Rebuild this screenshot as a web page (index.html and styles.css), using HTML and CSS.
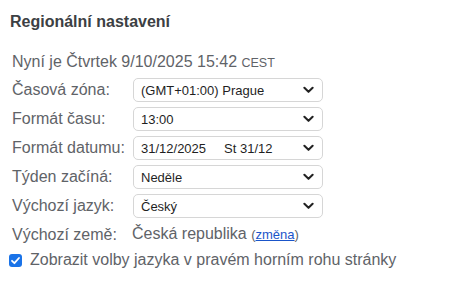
FILE: index.html
```html
<!DOCTYPE html>
<html lang="cs">
<head>
<meta charset="utf-8">
<link rel="stylesheet" href="styles.css">
</head>
<body>
<div class="panel">
  <h2 class="title">Regionální nastavení</h2>
  <div class="now">Nyní je Čtvrtek 9/10/2025 15:42 <span class="tz">CEST</span></div>
  <div class="form">
    <label class="lbl">Časová zóna:</label>
    <div class="sel"><span>(GMT+01:00) Prague</span><svg class="chev" viewBox="0 0 12 8"><path d="M1.5 1.5 L6 6 L10.5 1.5" /></svg></div>
    <label class="lbl">Formát času:</label>
    <div class="sel"><span>13:00</span><svg class="chev" viewBox="0 0 12 8"><path d="M1.5 1.5 L6 6 L10.5 1.5" /></svg></div>
    <label class="lbl">Formát datumu:</label>
    <div class="sel"><span>31/12/2025&nbsp;&nbsp;&nbsp;&nbsp; St 31/12</span><svg class="chev" viewBox="0 0 12 8"><path d="M1.5 1.5 L6 6 L10.5 1.5" /></svg></div>
    <label class="lbl">Týden začíná:</label>
    <div class="sel"><span>Neděle</span><svg class="chev" viewBox="0 0 12 8"><path d="M1.5 1.5 L6 6 L10.5 1.5" /></svg></div>
    <label class="lbl">Výchozí jazyk:</label>
    <div class="sel"><span>Český</span><svg class="chev" viewBox="0 0 12 8"><path d="M1.5 1.5 L6 6 L10.5 1.5" /></svg></div>
    <span class="lbl row">Výchozí země:</span>
    <span class="val row">Česká republika <span class="small">(<a href="#">změna</a>)</span></span>
  </div>
  <label class="check"><span class="box"><svg viewBox="0 0 13 13"><path d="M3 6.8 L5.4 9.2 L10 4" /></svg></span>Zobrazit volby jazyka v pravém horním rohu stránky</label>
</div>
</body>
</html>
```

FILE: styles.css
```css
html, body {
  margin: 0;
  padding: 0;
  background: #ffffff;
}
body {
  font-family: "Liberation Sans", Arial, Helvetica, sans-serif;
  color: #5f6368;
}
.panel {
  padding: 12px 0 0 10px;
}
.title {
  margin: 0;
  font-size: 16px;
  font-weight: bold;
  color: #3c4043;
  line-height: 20px;
}
.now {
  margin: 20px 0 0 2px;
  font-size: 16px;
  line-height: 20px;
}
.tz {
  font-size: 12.5px;
}
.form {
  display: grid;
  grid-template-columns: 121px 190px;
  row-gap: 5px;
  margin: 5px 0 0 2px;
  align-items: center;
}
.lbl {
  font-size: 16px;
  line-height: 20px;
  color: #5f6368;
}
.row {
  line-height: 22px;
}
.sel {
  height: 24px;
  box-sizing: border-box;
  border: 1px solid #d6d6d6;
  border-radius: 5px;
  background: #fff;
  display: flex;
  align-items: center;
  justify-content: space-between;
  padding: 0 8px 0 7px;
  font-size: 13px;
  color: #1f1f1f;
  white-space: pre;
}
.chev {
  width: 11px;
  height: 8px;
}
.chev path {
  fill: none;
  stroke: #222;
  stroke-width: 2.2;
  stroke-linecap: round;
  stroke-linejoin: round;
}
.val {
  font-size: 16px;
  color: #5f6368;
  margin-left: -1px;
}
.small {
  font-size: 13px;
}
.small a {
  color: #1a55c9;
}
.check {
  display: flex;
  align-items: center;
  margin: 4px 0 0 -1px;
  font-size: 16px;
  line-height: 20px;
  color: #5f6368;
}
.box {
  width: 13px;
  height: 13px;
  border-radius: 3px;
  background: #1a73e8;
  margin-right: 8px;
  display: inline-flex;
}
.box svg {
  width: 13px;
  height: 13px;
}
.box path {
  fill: none;
  stroke: #fff;
  stroke-width: 1.8;
  stroke-linecap: round;
  stroke-linejoin: round;
}
```
